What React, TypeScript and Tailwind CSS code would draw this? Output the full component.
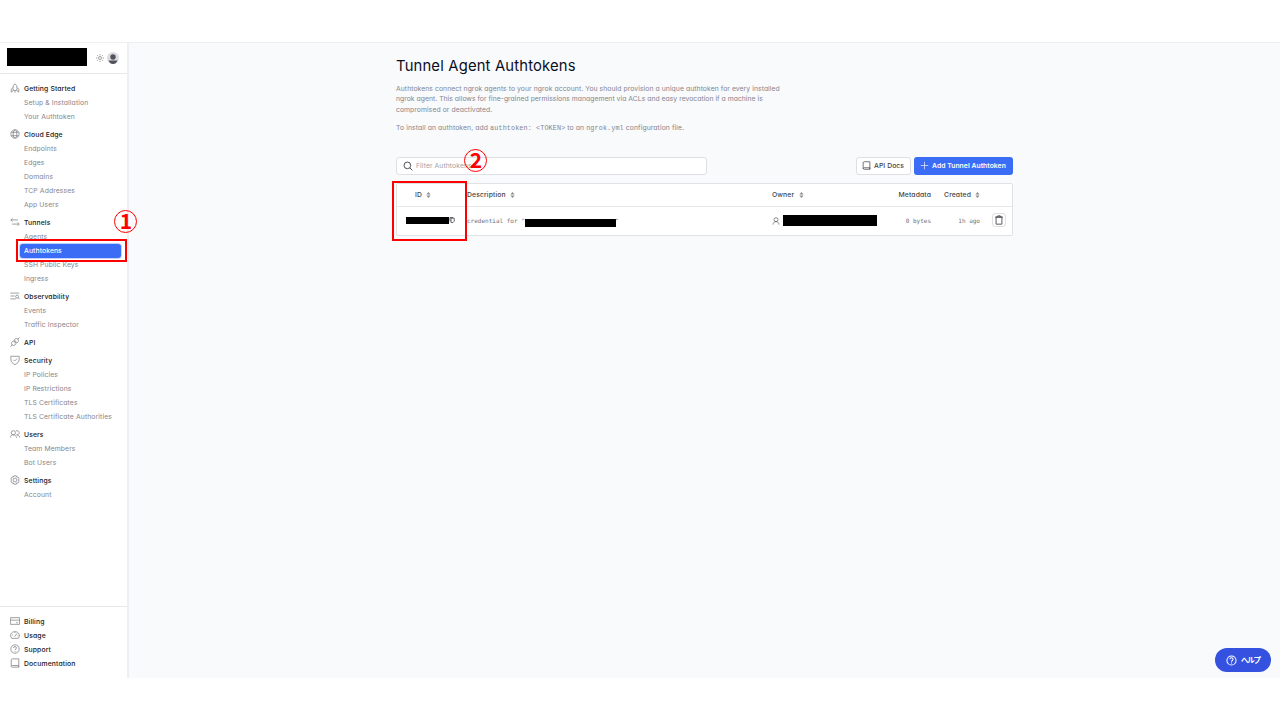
import React from "react";

type IconProps = { children: React.ReactNode; className?: string; sw?: number };

function Icon({ children, className = "size-[10px] text-[#8b8b93]", sw = 1.9 }: IconProps) {
  return (
    <svg viewBox="0 0 24 24" fill="none" stroke="currentColor" strokeWidth={sw} strokeLinejoin="round" className={"shrink-0 " + className}>
      {children}
    </svg>
  );
}

const rocket = (
  <>
    <path d="M8 18c-2-7-1-12 4-16 5 4 6 9 4 16Z" />
    <path d="M7 11l-4 4v7l5-4M17 11l4 4v7l-5-4M10 21.500h4" />
  </>
);
const globe = (
  <>
    <circle cx="12" cy="12" r="10" />
    <ellipse cx="12" cy="12" rx="4.500" ry="10" />
    <path d="M3 8h18M3 16h18" />
  </>
);
const arrows = <path d="M6 3L2 7l4 4M2 7h17M18 13l4 4-4 4M22 17H5" />;
const observe = (
  <>
    <path d="M1 5h21M1 12h10M1 19h13" />
    <circle cx="17" cy="13.500" r="3.500" />
    <path d="M19.500 16l3.500 4" />
  </>
);
const plug = (
  <>
    <path d="M1 23l5-5M18 6l5-5M8 9l7 7-3 3c-2 2-5 2-7 0s-2-5 0-7ZM12 5c2-2 5-2 7 0s2 5 0 7l-2 2-7-7ZM9 12l3-3M12 15l3-3" />
  </>
);
const shield = (
  <>
    <path d="M2 3h20v7c0 7-4 10-10 13C6 20 2 17 2 10Z" />
    <path d="M8 11.500l3 3 6-6" />
  </>
);
const people = (
  <>
    <circle cx="8" cy="9" r="5" />
    <path d="M0 21c1-4 4-7 8-7s7 3 8 7M14 4.500c4-2 8 1 8 4.500s-3 5-6 5c4 0 7 3 8 7" />
  </>
);
const gear = (
  <>
    <path d="M9 2h6l1 3 3-.5 3 5-2 2.500 2 2.500-3 5-3-.5-1 3H9l-1-3-3 .5-3-5L4 12 2 9.500l3-5 3 .5Z" />
    <circle cx="12" cy="12" r="4.500" />
  </>
);
const card = <path d="M1 4h22v16H1ZM1 10h22M15 16h4" />;
const gauge = <path d="M4 20c-5-7-2-16 8-16s13 9 8 16ZM11 16l6-8M5 12h2M12 5v2M18 14h2" />;
const help = (
  <>
    <circle cx="12" cy="12" r="10" />
    <path d="M8.500 9.500c0-4.500 7-4.500 7 0 0 2.500-3.500 2.500-3.500 5M12 16.500v2" />
  </>
);
const book = <path d="M21 18V2H6C4 2 3 3 3 5v14c0 2 1 3 3 3h15v-4H6c-2 0-3 1-3 2M21 18v4" />;

type Entry = { label: string };
type Group = { label: string; icon: React.ReactNode; items: Entry[] };

const groups: Group[] = [
  { label: "Getting Started", icon: rocket, items: [{ label: "Setup & Installation" }, { label: "Your Authtoken" }] },
  { label: "Cloud Edge", icon: globe, items: [{ label: "Endpoints" }, { label: "Edges" }, { label: "Domains" }, { label: "TCP Addresses" }, { label: "App Users" }] },
  { label: "Tunnels", icon: arrows, items: [{ label: "Agents" }, { label: "Authtokens" }, { label: "SSH Public Keys" }, { label: "Ingress" }] },
  { label: "Observability", icon: observe, items: [{ label: "Events" }, { label: "Traffic Inspector" }] },
  { label: "API", icon: plug, items: [] },
  { label: "Security", icon: shield, items: [{ label: "IP Policies" }, { label: "IP Restrictions" }, { label: "TLS Certificates" }, { label: "TLS Certificate Authorities" }] },
  { label: "Users", icon: people, items: [{ label: "Team Members" }, { label: "Bot Users" }] },
  { label: "Settings", icon: gear, items: [{ label: "Account" }] },
];

const footer = [
  { label: "Billing", icon: card },
  { label: "Usage", icon: gauge },
  { label: "Support", icon: help },
  { label: "Documentation", icon: book },
];

function Heading({ label, icon }: { label: string; icon: React.ReactNode }) {
  return (
    <div className="flex h-3.5 items-center gap-1 pl-2.5 text-[6.800px] font-medium tracking-[0.130px] text-[#18181b]">
      <Icon className="mb-[2px] size-[10px] text-[#85858c]">{icon}</Icon>
      <span>{label}</span>
    </div>
  );
}

function Item({ label }: Entry) {
  if (label === "Authtokens") {
    return (
      <div className="ml-5 mr-[6px] flex h-3.5 items-center rounded-[3px] bg-[#3b6cf5] pl-1 text-[6.800px] font-medium tracking-[0.080px] text-white ring-1 ring-[#c3d3fc]">
        {label}
      </div>
    );
  }
  return <div className="flex h-3.5 items-center pl-6 text-[6.800px] tracking-[0.110px] text-[#85858c]">{label}</div>;
}

function Sidebar() {
  return (
    <aside className="flex w-[129px] shrink-0 flex-col border-r-2 border-[#eeeff2] bg-white">
      <div className="flex h-[31px] shrink-0 items-center border-b border-[#e8e8eb] pl-[7px]">
        <div className="mb-[2px] h-[18px] w-20 bg-black" />
        <Icon className="ml-[9px] size-2 text-[#71717a]">
          <circle cx="12" cy="12" r="4.500" />
          <path d="M12 0v4M12 20v4M0 12h4M20 12h4M3.500 3.500l3 3M17.500 17.500l3 3M3.500 20.500l3-3M17.500 6.500l3-3" />
        </Icon>
        <svg viewBox="0 0 12 12" className="ml-[2.500px] size-3">
          <circle cx="6" cy="6" r="6" fill="#dcdde1" />
          <circle cx="6" cy="5" r="2.700" fill="#52525b" />
          <path d="M1.500 8.500h9C9.500 11 8 12 6 12S2.500 11 1.500 8.500Z" fill="#52525b" />
        </svg>
      </div>
      <nav className="flex grow flex-col gap-1 pt-2">
        {groups.map((g) => (
          <div key={g.label}>
            <Heading label={g.label} icon={g.icon} />
            {g.items.map((i) => (
              <Item key={i.label} label={i.label} />
            ))}
          </div>
        ))}
      </nav>
      <div className="h-[72px] shrink-0 border-t border-[#e8e8eb] pt-2">
        {footer.map((f) => (
          <Heading key={f.label} label={f.label} icon={f.icon} />
        ))}
      </div>
    </aside>
  );
}

function Sort() {
  return (
    <svg viewBox="0 0 5 8" className="h-2 w-[5px] shrink-0" fill="#8b8b93">
      <path d="M2.500 1L4.600 3.400H.4ZM2.500 7L4.600 4.600H.4Z" />
    </svg>
  );
}

function Main() {
  return (
    <main className="flex grow flex-col bg-[#f9fafc] pl-[267px] pt-[12px]">
      <h1 className="h-[22px] whitespace-nowrap text-[14.800px] leading-[22px] tracking-[0.170px] text-[#0a0f1f]">Tunnel Agent Authtokens</h1>
      <div className="mt-[6.500px] whitespace-nowrap text-[6.800px] leading-[10.500px] tracking-[0.070px] text-[#85858c]">
        <p>
          Authtokens connect ngrok agents to your ngrok account. You should provision a unique authtoken for every installed
          <br />
          <span className="tracking-[0.030px]">
            ngrok agent. This allows for fine-grained permissions management via ACLs and easy revocation if a machine is
          </span>
          <br />
          compromised or deactivated.
        </p>
        <p className="mt-[8px] tracking-[0.100px]">
          To install an authtoken, add <span className="font-['Liberation_Mono',monospace]">authtoken: &lt;TOKEN&gt;</span> to an{" "}
          <span className="font-['Liberation_Mono',monospace]">ngrok.yml</span> configuration file.
        </p>
      </div>
      <div className="mt-[23px] flex w-[617px] items-center">
        <div className="flex h-[18px] w-[311px] items-center gap-[3px] rounded-[3px] border border-[#dfe0e4] bg-white pl-1.5">
          <Icon className="size-[10px] text-[#3f3f46]" sw={2.200}>
            <circle cx="10.500" cy="10.500" r="8" />
            <path d="M16.500 16.500l6 6" />
          </Icon>
          <span className="pt-px text-[6.800px] leading-[10px] tracking-[0.080px] text-[#a1a1a8]">Filter Authtokens...</span>
        </div>
        <button className="ml-auto flex h-[18px] w-[55px] items-center gap-[3px] whitespace-nowrap rounded-[3px] border border-[#dfe0e4] bg-white pl-[5px] text-[6.800px] font-medium leading-[10px] tracking-[0.080px] text-[#3f3f46]">
          <Icon className="size-[9px] text-[#3f3f46]">{book}</Icon>
          <span className="pt-px">API Docs</span>
        </button>
        <button className="ml-[3px] flex h-[18px] w-[99px] items-center gap-[3px] whitespace-nowrap rounded-[3px] bg-[#3b6cf5] pl-[6px] text-[6.800px] font-semibold leading-[10px] tracking-[0.040px] text-white">
          <Icon className="size-[9px] text-white" sw={1.700}>
            <path d="M12 2v20M2 12h20" />
          </Icon>
          <span className="pt-px">Add Tunnel Authtoken</span>
        </button>
      </div>
      <div className="mt-[8px] w-[617px] rounded-[2px] border border-[#e1e2e6] bg-white">
        <div className="flex h-[23px] items-center whitespace-nowrap border-b border-[#e8e8eb] pt-px text-[6.800px] font-medium leading-[10px] tracking-[0.120px] text-[#3f3f46]">
          <div className="flex w-[70px] items-center gap-1 pl-[18px]">ID <Sort /></div>
          <div className="flex w-[305px] items-center gap-1">Description <Sort /></div>
          <div className="flex w-[98px] items-center gap-[5px]">Owner <Sort /></div>
          <div className="w-[61px] text-right">Metadata</div>
          <div className="flex w-[49px] items-center justify-end gap-1">Created <Sort /></div>
        </div>
        <div className="flex h-[28px] items-center whitespace-nowrap font-['DejaVu_Sans_Mono',monospace] text-[6px] leading-[8px] text-[#71717a]">
          <div className="flex w-[70px] items-center pl-[9px]">
            <div className="mb-px h-[7px] w-[43px] bg-black" />
            <Icon className="mb-px size-[6px] text-[#3f3f46]" sw={3}>
              <path d="M8 5h13v12l-5 5H8ZM4 18V2h13" />
            </Icon>
          </div>
          <div className="flex w-[305px] items-center">
            <span className="w-[58px]">credential for "</span>
            <div className="mt-[4px] h-2 w-[91px] bg-black" />
            <span className="-ml-px">"</span>
          </div>
          <div className="flex w-[106px] items-center">
            <Icon className="size-[8px] text-[#52525b]">
              <circle cx="12" cy="8" r="6" />
              <path d="M3 23c0-6 4-9 9-9s9 3 9 9" />
            </Icon>
            <div className="ml-[3px] h-[11px] w-[94px] bg-black" />
          </div>
          <div className="w-[53px] text-right">0 bytes</div>
          <div className="w-[49px] text-right">1h ago</div>
          <div className="mb-[2px] ml-[12px] flex size-[14px] items-center justify-center rounded-[3px] border border-[#dfe0e4]">
            <Icon className="size-[10px] text-[#3f3f46]" sw={2}>
              <path d="M5 5h14v17H5ZM2.500 5h19M9 5V2h6v3" />
            </Icon>
          </div>
        </div>
      </div>
    </main>
  );
}

function Marker({ n, className }: { n: string; className: string }) {
  return (
    <div className={"absolute flex size-[23px] items-center justify-center rounded-full border border-[#f00] font-['Noto_Sans_CJK_JP',sans-serif] text-[21px] font-bold leading-[23px] text-[#f00] " + className}>
      <span className="-mt-[2px] ml-px">{n}</span>
    </div>
  );
}

export default function App() {
  return (
    <div className="relative flex h-[720px] w-[1280px] flex-col overflow-hidden bg-white pt-[42px] font-['Inter','Noto_Sans_CJK_JP',sans-serif] [font-feature-settings:'cv11']">
      <div className="flex h-[636px] border-t border-[#eeeff2]">
        <Sidebar />
        <Main />
      </div>
      <div className="absolute left-4 top-[239px] h-[23px] w-[111px] border-2 border-[#f00]" />
      <div className="absolute left-[392px] top-[181px] h-[60px] w-[75px] border-2 border-[#f00]" />
      <Marker n="1" className="left-[114px] top-[210px]" />
      <Marker n="2" className="left-[464px] top-[149px]" />
      <div className="absolute left-[1215px] top-[648px] flex h-6 w-14 items-center gap-1 rounded-full bg-[#3451e0] pl-[11px] text-[7.500px] font-bold text-white">
        <Icon className="size-[11px] text-white" sw={2.200}>{help}</Icon>
        <span className="whitespace-nowrap pt-px tracking-[-1.300px]">ヘルプ</span>
      </div>
    </div>
  );
}
